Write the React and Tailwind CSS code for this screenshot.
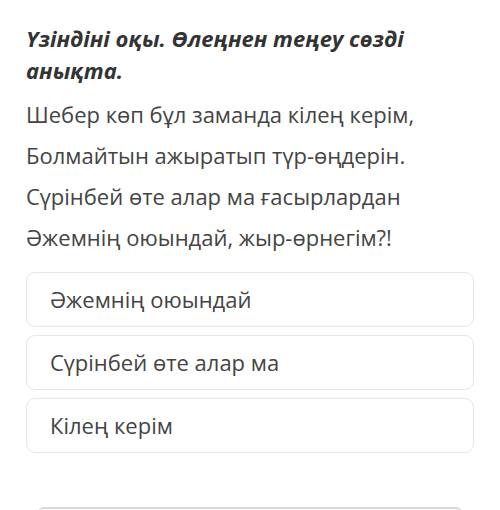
const options = ["Әжемнің оюындай", "Сүрінбей өте алар ма", "Кілең керім"];

const lines = [
  "Шебер көп бұл заманда кілең керім,",
  "Болмайтын ажыратып түр-өңдерін.",
  "Сүрінбей өте алар ма ғасырлардан",
  "Әжемнің оюындай, жыр-өрнегім?!",
];

export default function App() {
  return (
    <div
      className="w-[500px] h-[510px] overflow-hidden bg-white px-[26px] pt-[22px]"
      style={{ fontFamily: '"Open Sans", "Noto Sans", sans-serif' }}
    >
      <h1 className="text-[22px] leading-[32px] font-bold italic text-[#333333]">
        Үзіндіні оқы. Өлеңнен теңеу сөзді анықта.
      </h1>
      <div className="mt-[8px] text-[22px] leading-[41px] text-[#444444]">
        {lines.map((l) => (
          <p key={l}>{l}</p>
        ))}
      </div>
      <div className="mt-[14px] flex flex-col gap-[8px]">
        {options.map((o) => (
          <div
            key={o}
            className="h-[55px] rounded-[9px] border border-[#e6e6e6] flex items-center pl-[23px] text-[22px] text-[#444444]"
          >
            {o}
          </div>
        ))}
      </div>
      <div className="mt-[54px] mx-[12px] h-[20px] rounded-t-[6px] border-t-2 border-[#d9d9d9]" />
    </div>
  );
}
